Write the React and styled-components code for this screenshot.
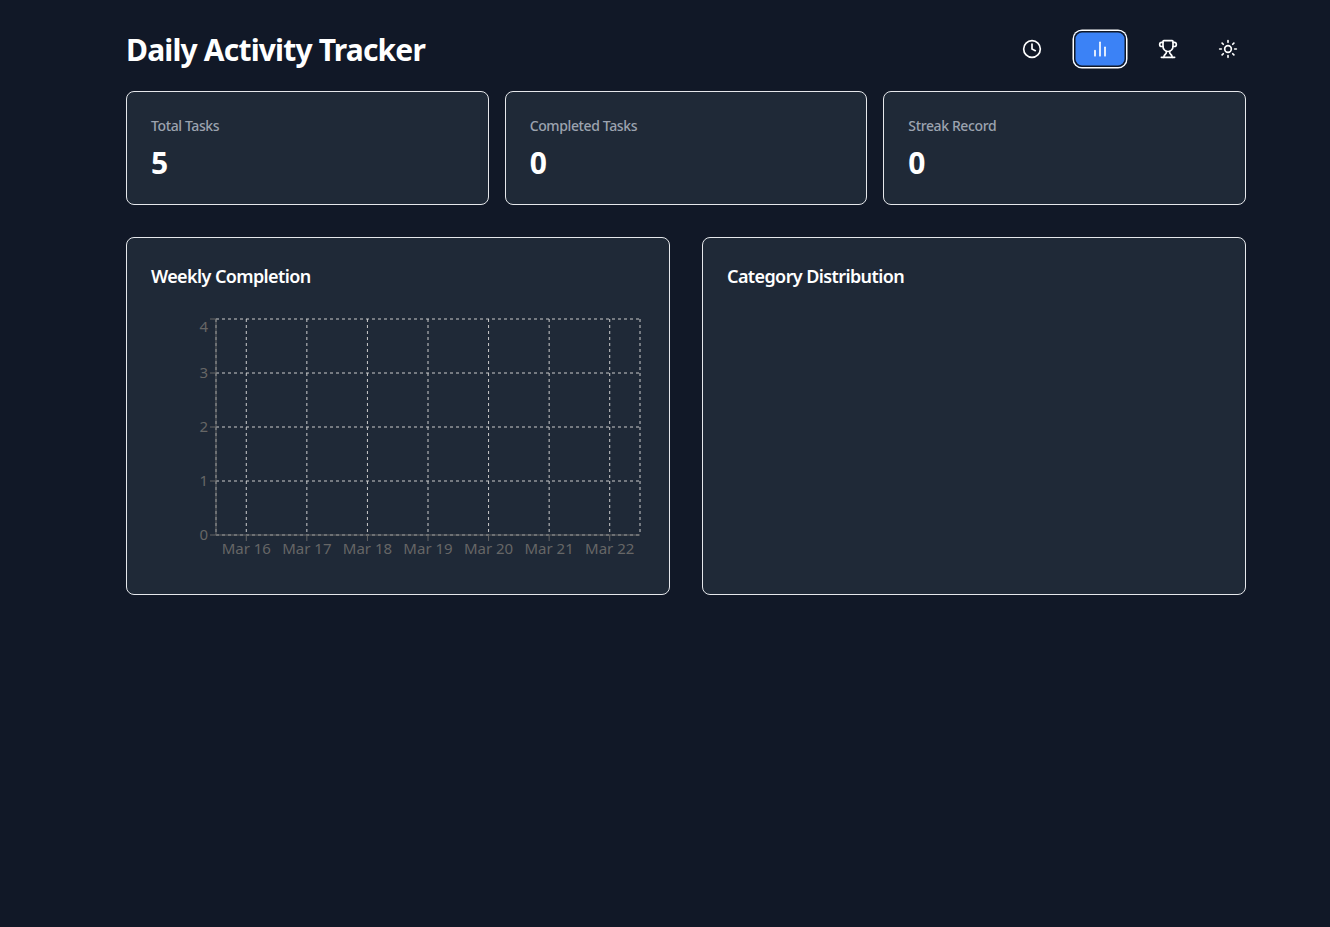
import React from "react";
import styled, { createGlobalStyle } from "styled-components";
import { Clock, Trophy, Sun } from "lucide-react";

const GlobalStyle = createGlobalStyle`
  body {
    margin: 0;
    background: #111827;
    color: #fff;
    font-family: "Noto Sans", sans-serif;
  }
`;

const BarsIcon = () => (
  <svg width="20" height="20" viewBox="0 0 24 24" fill="none" stroke="currentColor" strokeWidth="2" strokeLinecap="round" strokeLinejoin="round">
    <line x1="18" y1="20" x2="18" y2="10" />
    <line x1="12" y1="20" x2="12" y2="4" />
    <line x1="6" y1="20" x2="6" y2="14" />
  </svg>
);

const stats = [
  { label: "Total Tasks", value: 5 },
  { label: "Completed Tasks", value: 0 },
  { label: "Streak Record", value: 0 },
];

const navItems = [
  { icon: <Clock size={20} />, wide: true },
  { icon: <BarsIcon />, wide: true, active: true },
  { icon: <Trophy size={20} />, wide: true },
  { icon: <Sun size={20} /> },
];

const days = ["Mar 16", "Mar 17", "Mar 18", "Mar 19", "Mar 20", "Mar 21", "Mar 22"];
const levels = [4, 3, 2, 1, 0];

// plot area inside the 494x256 chart drawing
const LEFT = 65;
const RIGHT = 489;
const TOP = 5;
const BOTTOM = 221;
const bandWidth = (RIGHT - LEFT) / days.length;
const dayX = (i) => LEFT + bandWidth * (i + 0.5);
const levelY = (n) => BOTTOM - ((BOTTOM - TOP) / 4) * n;

const WeeklyChart = () => (
  <ChartSvg viewBox="0 0 494 256">
    <g stroke="#ccc" strokeDasharray="3 3" fill="none">
      {levels.map((n) => (
        <line key={n} x1={LEFT} x2={RIGHT} y1={levelY(n)} y2={levelY(n)} />
      ))}
      {days.map((d, i) => (
        <line key={d} x1={dayX(i)} x2={dayX(i)} y1={TOP} y2={BOTTOM} />
      ))}
      <line x1={LEFT} x2={LEFT} y1={TOP} y2={BOTTOM} />
      <line x1={RIGHT} x2={RIGHT} y1={TOP} y2={BOTTOM} />
    </g>
    <g stroke="#666" fill="none">
      <line x1={LEFT} x2={LEFT} y1={TOP} y2={BOTTOM} />
      <line x1={LEFT} x2={RIGHT} y1={BOTTOM} y2={BOTTOM} />
      {levels.map((n) => (
        <line key={n} x1={LEFT - 6} x2={LEFT} y1={levelY(n)} y2={levelY(n)} />
      ))}
      {days.map((d, i) => (
        <line key={d} x1={dayX(i)} x2={dayX(i)} y1={BOTTOM} y2={BOTTOM + 6} />
      ))}
    </g>
    <g fill="#666" fontSize="15">
      {levels.map((n) => (
        <text key={n} x={LEFT - 8} y={n === 4 ? levelY(n) + 12.5 : levelY(n) + 5} textAnchor="end">
          {n}
        </text>
      ))}
      {days.map((d, i) => (
        <text key={d} x={dayX(i)} y={BOTTOM + 19} textAnchor="middle">
          {d}
        </text>
      ))}
    </g>
  </ChartSvg>
);

const App = () => (
  <Page>
    <GlobalStyle />
    <Header>
      <Title>Daily Activity Tracker</Title>
      <Nav>
        {navItems.map(({ icon, wide, active }, i) => (
          <NavButton key={i} $wide={wide} $active={active}>
            {icon}
          </NavButton>
        ))}
      </Nav>
    </Header>
    <StatGrid>
      {stats.map((s) => (
        <StatCard key={s.label}>
          <StatLabel>{s.label}</StatLabel>
          <StatValue>{s.value}</StatValue>
        </StatCard>
      ))}
    </StatGrid>
    <ChartGrid>
      <ChartCard>
        <ChartTitle>Weekly Completion</ChartTitle>
        <WeeklyChart />
      </ChartCard>
      <ChartCard>
        <ChartTitle>Category Distribution</ChartTitle>
      </ChartCard>
    </ChartGrid>
  </Page>
);

export default App;

const Page = styled.div`
  box-sizing: border-box;
  min-height: 927px;
  padding: 32px 84px 0 126px;
`;

const Header = styled.header`
  display: flex;
  align-items: center;
  justify-content: space-between;
  height: 36px;
  margin-bottom: 23px;
`;

const Title = styled.h1`
  margin: 0;
  font-size: 30px;
  line-height: 36px;
  font-weight: 700;
  letter-spacing: -0.82px;
  color: #fff;
`;

const Nav = styled.nav`
  display: flex;
  gap: 16px;
  margin-top: -2px;
`;

const NavButton = styled.button`
  display: flex;
  align-items: center;
  justify-content: center;
  box-sizing: border-box;
  width: ${(p) => (p.$wide ? "52px" : "36px")};
  height: 36px;
  padding: 0;
  border: none;
  border-radius: 8px;
  color: #fff;
  background: ${(p) => (p.$active ? "#3b82f6" : "transparent")};
  box-shadow: ${(p) => (p.$active ? "inset 0 0 0 1.5px #111827, 0 0 0 1.5px #fff" : "none")};
`;

const StatGrid = styled.section`
  display: grid;
  grid-template-columns: repeat(3, 1fr);
  gap: 16px;
  margin-bottom: 32px;
`;

const Card = styled.div`
  box-sizing: border-box;
  padding: 24px;
  background: #1f2937;
  border: 1px solid #e5e7eb;
  border-radius: 8px;
`;

const StatCard = styled(Card)`
  height: 114px;
`;

const StatLabel = styled.div`
  font-size: 14px;
  line-height: 20px;
  font-weight: 500;
  letter-spacing: -0.38px;
  color: #9ca3af;
`;

const StatValue = styled.div`
  margin-top: 9px;
  font-size: 30px;
  line-height: 36px;
  font-weight: 700;
  color: #fff;
`;

const ChartGrid = styled.section`
  display: grid;
  grid-template-columns: repeat(2, 1fr);
  gap: 32px;
`;

const ChartCard = styled(Card)`
  height: 358px;
`;

const ChartTitle = styled.h2`
  margin: 0 0 24px;
  font-size: 18px;
  line-height: 28px;
  font-weight: 600;
  letter-spacing: -0.6px;
  color: #fff;
`;

const ChartSvg = styled.svg`
  display: block;
  width: 494px;
  height: 256px;
  font-family: "Noto Sans", sans-serif;
`;
